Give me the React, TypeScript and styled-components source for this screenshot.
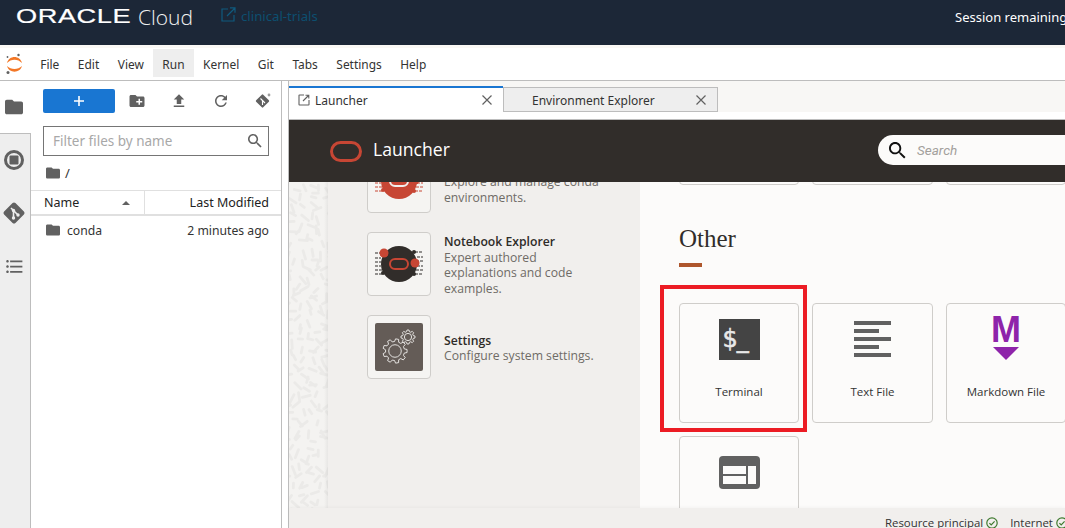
import { createGlobalStyle, styled } from "styled-components";

const GlobalStyle = createGlobalStyle`
  html, body {
    margin: 0;
    padding: 0;
    background: #fff;
    overflow: hidden;
  }
  * {
    box-sizing: border-box;
  }
`;

const Page = styled.div`
  width: 1065px;
  height: 528px;
  display: flex;
  flex-direction: column;
  overflow: hidden;
  font-family: "Noto Sans", "Open Sans", sans-serif;
  color: #333;
`;

const TopBar = styled.header`
  height: 45px;
  flex: none;
  background: #1c2737;
  display: flex;
  align-items: flex-start;
  padding-left: 16px;
  position: relative;
  white-space: nowrap;
`;
const OracleWord = styled.span`
  display: block;
  width: 114px;
  margin-top: 4px;
  font-family: "Liberation Sans", sans-serif;
  font-size: 20px;
  line-height: 24px;
  font-weight: 400;
  color: #fff;
  letter-spacing: 0.4px;
  -webkit-text-stroke: 0.2px #fff;
  transform: scaleX(1.36);
  transform-origin: left center;
`;
const CloudWord = styled.span`
  margin: 3px 0 0 8px;
  font-family: "Open Sans", sans-serif;
  font-size: 21px;
  line-height: 28px;
  font-weight: 300;
  color: #f2f2f2;
`;
const ProjectLink = styled.a`
  display: flex;
  align-items: center;
  gap: 5px;
  margin: 8px 0 0 28px;
  font-size: 13.2px;
  line-height: 16px;
  color: #0d4f70;
  svg {
    width: 15px;
    height: 15px;
    margin-top: -3px;
  }
`;
const Session = styled.span`
  position: absolute;
  left: 955px;
  top: 8px;
  font-size: 13px;
  line-height: 18px;
  color: #fff;
`;

const Strip = styled.div`
  height: 3px;
  flex: none;
  background: #faf8f5;
`;

const MenuBar = styled.nav`
  height: 33px;
  flex: none;
  display: flex;
  align-items: flex-start;
  padding: 1px 0 0 31px;
  background: #fff;
  border-bottom: 1px solid #bdbdbd;
  position: relative;
`;
const AppLogo = styled.svg`
  position: absolute;
  left: 5px;
  top: 5px;
  width: 18px;
  height: 22px;
`;
const MenuItem = styled.div<{ $active?: boolean }>`
  height: 28px;
  padding: 0 9.25px;
  font-size: 11.95px;
  line-height: 31px;
  color: #333;
  background: ${(p) => (p.$active ? "#eeeeee" : "transparent")};
`;

const Body = styled.div`
  flex: 1;
  min-height: 0;
  display: flex;
`;

const SideBar = styled.aside`
  width: 31px;
  flex: none;
  display: flex;
  flex-direction: column;
  background: #eeeeee;
  border-right: 1px solid #bdbdbd;
`;
const SideTab = styled.div<{ $active?: boolean }>`
  height: 53px;
  flex: none;
  display: flex;
  align-items: center;
  justify-content: center;
  padding: 0 ${(p) => (p.$active ? "3px" : "2px")} ${(p) => (p.$active ? "0" : "1px")} 0;
  margin-right: ${(p) => (p.$active ? "-1px" : "0")};
  background: ${(p) => (p.$active ? "#fff" : "transparent")};
  border-bottom: ${(p) => (p.$active ? "1px solid #bdbdbd" : "0")};
  svg {
    fill: #616161;
  }
`;

const FileBrowser = styled.section`
  width: 251px;
  flex: none;
  display: flex;
  flex-direction: column;
  background: #fff;
  border-right: 1px solid #bdbdbd;
`;
const Toolbar = styled.div`
  display: flex;
  align-items: center;
  height: 24px;
  margin: 8px 0 0 12px;
`;
const NewButton = styled.div`
  width: 72px;
  height: 24px;
  flex: none;
  margin-right: 1px;
  display: flex;
  align-items: center;
  justify-content: center;
  background: #1976d2;
  border-radius: 2px;
  svg {
    width: 12px;
    height: 12px;
  }
`;
const ToolButton = styled.div`
  width: 42px;
  height: 24px;
  flex: none;
  display: flex;
  align-items: center;
  justify-content: center;
  svg {
    fill: #616161;
  }
`;
const FilterBox = styled.div`
  height: 30px;
  margin: 13px 12px 0;
  padding: 0 6px 0 9px;
  display: flex;
  align-items: center;
  justify-content: space-between;
  border: 1px solid #757575;
  font-size: 13.5px;
  color: #a8a8a8;
  svg {
    fill: #616161;
  }
`;
const Crumbs = styled.div`
  height: 34px;
  padding-left: 15px;
  display: flex;
  align-items: center;
  gap: 5px;
  font-size: 13px;
  color: #333;
  svg {
    fill: #616161;
  }
`;
const ListHead = styled.div`
  height: 26px;
  display: flex;
  border-top: 1px solid #e0e0e0;
  border-bottom: 2px solid #e0e0e0;
  font-size: 12.5px;
  line-height: 24px;
  color: #222;
`;
const NameCol = styled.div`
  width: 114px;
  padding: 0 14px 0 13px;
  display: flex;
  align-items: center;
  justify-content: space-between;
  border-right: 1px solid #e0e0e0;
`;
const SortCaret = styled.span`
  width: 0;
  height: 0;
  border-left: 4.5px solid transparent;
  border-right: 4.5px solid transparent;
  border-bottom: 4.5px solid #616161;
`;
const DateCol = styled.div`
  flex: 1;
  padding-right: 12px;
  text-align: right;
`;
const FileRow = styled.div`
  height: 28px;
  padding: 0 12px 0 15px;
  display: flex;
  align-items: center;
  gap: 7px;
  font-size: 12.2px;
  color: #333;
  svg {
    fill: #616161;
  }
`;
const FileName = styled.span`
  flex: 1;
`;

const Splitter = styled.div`
  width: 6px;
  flex: none;
  background: #fff;
`;

const Main = styled.main`
  flex: 1;
  min-width: 0;
  display: flex;
  flex-direction: column;
  border-left: 1px solid #bdbdbd;
`;
const TabBar = styled.div`
  height: 31px;
  flex: none;
  display: flex;
  align-items: flex-end;
  background: #f8f7f5;
`;
const Tab = styled.div<{ $active?: boolean }>`
  width: ${(p) => (p.$active ? "214px" : "215px")};
  height: ${(p) => (p.$active ? "26px" : "25px")};
  display: flex;
  align-items: center;
  padding: ${(p) => (p.$active ? "0 10px 0 9px" : "1px 10px 0 28px")};
  gap: 5px;
  font-size: 12px;
  color: #333;
  background: ${(p) => (p.$active ? "#fff" : "#eeeeee")};
  border-top: ${(p) => (p.$active ? "2px solid #1976d2" : "1px solid #bdbdbd")};
  border-left: ${(p) => (p.$active ? "0" : "1px solid #bdbdbd")};
  border-right: ${(p) => (p.$active ? "0" : "1px solid #bdbdbd")};
  border-bottom: ${(p) => (p.$active ? "0" : "1px solid #bdbdbd")};
  svg {
    flex: none;
  }
`;
const TabLabel = styled.span`
  flex: 1;
`;
const Launcher = styled.div`
  flex: 1;
  min-height: 0;
  display: flex;
  flex-direction: column;
  padding-top: 7px;
  background: #fff;
  font-family: "Open Sans", "Noto Sans", sans-serif;
  position: relative;
`;
const LauncherHead = styled.div`
  height: 63px;
  flex: none;
  position: relative;
  z-index: 1;
  display: flex;
  align-items: center;
  padding-left: 41px;
  gap: 11px;
  background: #312d2a;
  border-top: 1px solid #bdbdbd;
  color: #fff;
  svg {
    flex: none;
  }
`;
const HeadTitle = styled.span`
  font-size: 17.6px;
  line-height: 24px;
  margin-top: -4px;
`;
const SearchBox = styled.div`
  position: absolute;
  left: 589px;
  top: 15px;
  width: 260px;
  height: 30px;
  display: flex;
  align-items: center;
  gap: 11px;
  padding-left: 11px;
  border-radius: 15px;
  background: #fcfbfa;
  font-family: Roboto, sans-serif;
  font-size: 13.5px;
  font-style: italic;
  color: #a3a09c;
`;
const LauncherBody = styled.div`
  flex: 1;
  min-height: 0;
  display: flex;
  overflow: hidden;
`;
const PatternStrip = styled.div`
  width: 39px;
  flex: none;
  position: relative;
  background: #f4f3f1;
  svg {
    display: block;
    width: 39px;
    height: 100%;
  }
  &::after {
    content: "";
    position: absolute;
    top: 0;
    bottom: 0;
    right: 0;
    width: 4px;
    background: linear-gradient(to right, rgba(0, 0, 0, 0), rgba(0, 0, 0, 0.05));
  }
`;
const ExamplePanel = styled.div`
  width: 312px;
  flex: none;
  padding: 0 0 0 39px;
  background: #f1efed;
  display: flex;
  flex-direction: column;
  gap: 19px;
`;
const ExampleRow = styled.div<{ $first?: boolean }>`
  display: flex;
  align-items: center;
  gap: 13px;
  margin-top: ${(p) => (p.$first ? "-33px" : "0")};
`;
const ExampleCard = styled.div`
  width: 64px;
  height: 64px;
  flex: none;
  display: flex;
  align-items: center;
  justify-content: center;
  border: 1px solid #cfcdca;
  border-radius: 4px;
  background: #f5f4f2;
`;
const ExampleText = styled.div`
  font-size: 12.2px;
  line-height: 15.5px;
  color: #6f6b66;
  width: 160px;
  margin-top: 2px;
`;
const ExampleTitle = styled.div`
  font-weight: 600;
  color: #2e2b28;
`;
const SettingsTile = styled.div`
  width: 48px;
  height: 48px;
  display: flex;
  align-items: center;
  justify-content: center;
  background: #645c57;
  border-radius: 2px;
`;
const CardPanel = styled.div`
  flex: 1;
  min-width: 0;
  padding-left: 39px;
  background: #fcfbfa;
`;
const TopCards = styled.div`
  display: grid;
  grid-template-columns: 120px 121px 120px;
  gap: 13px;
  margin-top: -117px;
`;
const SectionTitle = styled.h2`
  margin: 38px 0 0;
  font-family: "Liberation Serif", serif;
  font-size: 25px;
  line-height: 32px;
  font-weight: 400;
  color: #312d2a;
`;
const SectionRule = styled.div`
  width: 23px;
  height: 4px;
  margin-top: 8px;
  background: #ae562c;
`;
const Cards = styled.div`
  display: grid;
  grid-template-columns: 120px 121px 120px;
  gap: 13px;
  margin-top: 36px;
`;
const Card = styled.div`
  height: 120px;
  position: relative;
  display: flex;
  flex-direction: column;
  align-items: center;
  border: 1px solid #cfcdca;
  border-radius: 4px;
  background: #fcfbfa;
`;
const CardIconSlot = styled.div`
  height: 70px;
  flex: none;
  width: 100%;
  display: flex;
  flex-direction: column;
  align-items: center;
  justify-content: center;
`;
const CardLabel = styled.div`
  margin-top: 10px;
  font-size: 11.5px;
  line-height: 16px;
  color: #333;
`;
const Highlight = styled.div`
  position: absolute;
  left: -20px;
  top: -19px;
  width: 147px;
  height: 147px;
  border: 4px solid #ec1c24;
  pointer-events: none;
`;
const TerminalTile = styled.div`
  width: 41px;
  height: 41px;
  padding: 6px 0 0 4px;
  background: #444;
  color: #e8e8e8;
  font-family: "DejaVu Sans", sans-serif;
  font-size: 24px;
  line-height: 28px;
  letter-spacing: -1px;
  -webkit-text-stroke: 0.5px #e8e8e8;
  white-space: nowrap;
  overflow: hidden;
`;
const MarkdownLetter = styled.div`
  margin-top: -2px;
  font-family: "Liberation Sans", sans-serif;
  font-weight: 700;
  font-size: 36px;
  line-height: 27px;
  color: #8e24aa;
`;
const MarkdownArrow = styled.div`
  width: 0;
  height: 0;
  margin-top: 4px;
  border-left: 13px solid transparent;
  border-right: 13px solid transparent;
  border-top: 13px solid #8e24aa;
`;
const StatusBar = styled.footer`
  height: 20px;
  flex: none;
  display: flex;
  align-items: flex-start;
  padding: 7px 0 0 596px;
  background: #f1efed;
  box-shadow: 0 -1px 3px rgba(0, 0, 0, 0.03);
  font-size: 11.4px;
  line-height: 16px;
  color: #333;
  white-space: nowrap;
  position: relative;
`;
const StatusItem = styled.span`
  display: flex;
  align-items: center;
  gap: 3px;
  margin-right: 12px;
  svg {
    flex: none;
  }
`;

const FolderIcon = ({ size = 16 }: { size?: number }) => (
  <svg width={size} height={size} viewBox="2 4 20 16">
    <path d="M10 4H4c-1.1 0-1.99.9-1.99 2L2 18c0 1.1.9 2 2 2h16c1.1 0 2-.9 2-2V8c0-1.1-.9-2-2-2h-8l-2-2z" />
  </svg>
);

const GitDiamond = ({ size }: { size: number }) => (
  <svg width={size} height={size} viewBox="0 0 24 24">
    <rect x="4" y="4" width="16" height="16" rx="2" fill="#616161" transform="rotate(45 12 12)" />
    <path d="M9 7l7 7M11.5 9.5v8" stroke="#eee" strokeWidth="1.6" fill="none" />
    <circle cx="11.5" cy="9.5" r="1.7" fill="#eee" />
    <circle cx="11.5" cy="17" r="1.7" fill="#eee" />
    <circle cx="16" cy="14" r="1.7" fill="#eee" />
  </svg>
);

const CloseIcon = () => (
  <svg width="12" height="12" viewBox="0 0 12 12">
    <path d="M1.5 1.5l9 9M10.5 1.5l-9 9" stroke="#616161" strokeWidth="1.2" fill="none" />
  </svg>
);

const CheckIcon = () => (
  <svg width="12" height="12" viewBox="0 0 12 12">
    <circle cx="6" cy="6" r="5.2" fill="none" stroke="#3f7a2f" strokeWidth="1.2" />
    <path d="M3.4 6.2l1.8 1.8 3.4-3.6" fill="none" stroke="#3f7a2f" strokeWidth="1.2" />
  </svg>
);

const SearchGlyph = ({ size, color }: { size: number; color?: string }) => (
  <svg width={size} height={size} viewBox="3 3 18 18" fill={color}>
    <path d="M15.5 14h-.79l-.28-.27C15.41 12.59 16 11.11 16 9.5 16 5.91 13.09 3 9.5 3S3 5.91 3 9.5 5.91 16 9.5 16c1.61 0 3.09-.59 4.23-1.57l.27.28v.79l5 4.99L20.49 19l-4.99-5zm-6 0C7.01 14 5 11.99 5 9.5S7.01 5 9.5 5 14 7.01 14 9.5 11.99 14 9.5 14z" />
  </svg>
);

// circle with the oracle oval and circuit ticks, used by both example cards
const CircuitIcon = ({ body, oval, dot }: { body: string; oval: string; dot: string }) => {
  const tick = body === "#c74634" ? "#c74634" : "#312d2a";
  return (
    <svg width="48" height="36" viewBox="0 0 48 36">
      <path
        d="M0 7h8M0 12h6M0 16h7M0 20h6M0 24h8M0 28h7M40 6h8M42 11h6M41 15h7M42 20h6M41 24h7M40 28h8"
        stroke={tick}
        strokeWidth="1.2"
        strokeDasharray="3 1"
      />
      <circle cx="24" cy="18" r="18" fill={body} />
      <rect x="15" y="13" width="18" height="10" rx="5" fill="none" stroke={oval} strokeWidth="2" />
      <circle cx="9" cy="7" r="4.5" fill={dot} />
      <circle cx="40" cy="17" r="4.5" fill={dot} />
      <circle cx="39" cy="6" r="2" fill={tick} />
      <circle cx="8" cy="27" r="2" fill={tick} />
      <circle cx="39" cy="28" r="2" fill={tick} />
    </svg>
  );
};

const Gear = ({ cx, cy, r, teeth }: { cx: number; cy: number; r: number; teeth: number }) => {
  const d: string[] = [];
  for (let i = 0; i < teeth; i++) {
    const a = (i / teeth) * Math.PI * 2;
    const step = (Math.PI * 2) / teeth;
    const pts = [
      [r, a - step * 0.32],
      [r + r * 0.28, a - step * 0.18],
      [r + r * 0.28, a + step * 0.18],
      [r, a + step * 0.32],
    ];
    pts.forEach(([rad, ang], j) => {
      d.push(`${i === 0 && j === 0 ? "M" : "L"}${(cx + rad * Math.cos(ang)).toFixed(2)} ${(cy + rad * Math.sin(ang)).toFixed(2)}`);
    });
  }
  return (
    <g fill="none" stroke="#f1efed" strokeWidth="0.9">
      <path d={d.join(" ") + "Z"} />
      <circle cx={cx} cy={cy} r={r * 0.66} />
    </g>
  );
};

const PatternMarks = () => {
  // scattered rice-like marks, seeded so it stays the same each render
  const marks: string[] = [];
  let seed = 17;
  const rnd = () => {
    seed = (seed * 9301 + 49297) % 233280;
    return seed / 233280;
  };
  for (let y = 2; y < 330; y += 9) {
    for (let x = 0; x < 39; x += 9) {
      const px = x + rnd() * 6;
      const py = y + rnd() * 6;
      const a = rnd() * Math.PI;
      const l = 4 + rnd() * 5;
      marks.push(`M${px.toFixed(1)} ${py.toFixed(1)}l${(Math.cos(a) * l).toFixed(1)} ${(Math.sin(a) * l).toFixed(1)}`);
    }
  }
  return (
    <svg>
      <path d={marks.join("")} stroke="#ebeae8" strokeWidth="2.8" strokeLinecap="round" fill="none" />
    </svg>
  );
};

export default function App() {
  const menus = ["File", "Edit", "View", "Run", "Kernel", "Git", "Tabs", "Settings", "Help"];

  return (
    <Page>
      <GlobalStyle />
      <TopBar>
        <OracleWord>ORACLE</OracleWord>
        <CloudWord>Cloud</CloudWord>
        <ProjectLink>
          <svg viewBox="0 0 15 15" fill="none" stroke="#0f5a7e" strokeWidth="1.2">
            <path d="M7 2H1v12h12V8M6 9l8-8M9 .8h5v5" />
          </svg>
          clinical-trials
        </ProjectLink>
        <Session>Session remaining</Session>
      </TopBar>
      <Strip />
      <MenuBar>
        <AppLogo viewBox="0 0 18 22">
          <path d="M2 10C4 2 15 2 17 10C13 5.5 6 5.5 2 10Z" fill="#f37726" />
          <path d="M2 13C4 20.5 15 20.5 17 13C13 17 6 17 2 13Z" fill="#f37726" />
          <circle cx="13.5" cy="2" r="1.2" fill="#616161" />
          <circle cx="3" cy="19.5" r="1.5" fill="#616161" />
          <circle cx="2.5" cy="4" r="0.9" fill="#616161" />
        </AppLogo>
        {menus.map((m) => (
          <MenuItem key={m} $active={m === "Run"}>
            {m}
          </MenuItem>
        ))}
      </MenuBar>
      <Body>
        <SideBar>
          <SideTab $active>
            <FolderIcon size={18} />
          </SideTab>
          <SideTab>
            <svg width="20" height="20" viewBox="0 0 20 20">
              <path
                fillRule="evenodd"
                d="M10 0a10 10 0 1 0 0 20a10 10 0 1 0 0-20zM10 3a7 7 0 1 1 0 14a7 7 0 1 1 0-14z"
              />
              <rect x="5.5" y="5.5" width="9" height="9" rx="1" />
            </svg>
          </SideTab>
          <SideTab>
            <GitDiamond size={24} />
          </SideTab>
          <SideTab>
            <svg width="21" height="21" viewBox="0 0 24 24">
              <path d="M4 10.5c-.83 0-1.5.67-1.5 1.5s.67 1.5 1.5 1.5 1.5-.67 1.5-1.5-.67-1.5-1.5-1.5zm0-6c-.83 0-1.5.67-1.5 1.5S3.17 7.5 4 7.5 5.5 6.83 5.5 6 4.83 4.5 4 4.5zm0 12c-.83 0-1.5.68-1.5 1.5s.68 1.5 1.5 1.5 1.5-.68 1.5-1.5-.67-1.5-1.5-1.5zM7 19h14v-2H7v2zm0-6h14v-2H7v2zm0-8v2h14V5H7z" />
            </svg>
          </SideTab>
        </SideBar>
        <FileBrowser>
          <Toolbar>
            <NewButton>
              <svg viewBox="0 0 12 12">
                <path d="M6 1v10M1 6h10" stroke="#fff" strokeWidth="1.6" />
              </svg>
            </NewButton>
            <ToolButton>
              <svg width="18" height="18" viewBox="0 0 24 24">
                <path d="M20 6h-8l-2-2H4c-1.11 0-1.99.89-1.99 2L2 18c0 1.11.89 2 2 2h16c1.11 0 2-.89 2-2V8c0-1.11-.89-2-2-2zm-1 8h-3v3h-2v-3h-3v-2h3V9h2v3h3v2z" />
              </svg>
            </ToolButton>
            <ToolButton>
              <svg width="18" height="18" viewBox="0 0 24 24">
                <path d="M9 16h6v-6h4l-7-7-7 7h4zm-4 2h14v2H5z" />
              </svg>
            </ToolButton>
            <ToolButton>
              <svg width="18" height="18" viewBox="0 0 24 24">
                <path d="M17.65 6.35C16.2 4.9 14.21 4 12 4c-4.42 0-7.99 3.58-7.99 8s3.57 8 7.99 8c3.73 0 6.84-2.55 7.73-6h-2.08c-.82 2.33-3.04 4-5.65 4-3.31 0-6-2.69-6-6s2.69-6 6-6c1.66 0 3.14.69 4.22 1.78L13 11h7V4l-2.35 2.35z" />
              </svg>
            </ToolButton>
            <ToolButton>
              <svg width="16" height="16" viewBox="0 0 16 16">
                <rect x="2.5" y="3" width="10" height="10" rx="1" transform="rotate(45 7.5 8)" />
                <path d="M5.5 5.5l4.5 4.5M7.5 7.5v4.5" stroke="#fff" strokeWidth="1.1" fill="none" />
                <circle cx="14" cy="2" r="1.4" fill="#9e9e9e" />
              </svg>
            </ToolButton>
          </Toolbar>
          <FilterBox>
            Filter files by name
            <SearchGlyph size={14} />
          </FilterBox>
          <Crumbs>
            <FolderIcon size={14} />/
          </Crumbs>
          <ListHead>
            <NameCol>
              Name
              <SortCaret />
            </NameCol>
            <DateCol>Last Modified</DateCol>
          </ListHead>
          <FileRow>
            <FolderIcon size={14} />
            <FileName>conda</FileName>2 minutes ago
          </FileRow>
        </FileBrowser>
        <Splitter />
        <Main>
          <TabBar>
            <Tab $active>
              <svg width="12" height="12" viewBox="0 0 12 12" fill="none" stroke="#616161" strokeWidth="1.1">
                <path d="M6 1H1.5a.5.5 0 0 0-.5.5v9a.5.5 0 0 0 .5.5h9a.5.5 0 0 0 .5-.5V6M5 7l5.5-5.5M7.5 1.2h3.3v3.3" />
              </svg>
              <TabLabel>Launcher</TabLabel>
              <CloseIcon />
            </Tab>
            <Tab>
              <TabLabel>Environment Explorer</TabLabel>
              <CloseIcon />
            </Tab>
          </TabBar>
          <Launcher>
            <LauncherHead>
              <svg width="32" height="21" viewBox="0 0 32 21">
                <rect x="1.5" y="1.5" width="29" height="18" rx="9" fill="none" stroke="#c74634" strokeWidth="3" />
              </svg>
              <HeadTitle>Launcher</HeadTitle>
              <SearchBox>
                <SearchGlyph size={17} color="#111" />
                Search
              </SearchBox>
            </LauncherHead>
            <LauncherBody>
              <PatternStrip>
                <PatternMarks />
              </PatternStrip>
              <ExamplePanel>
                <ExampleRow $first>
                  <ExampleCard>
                    <CircuitIcon body="#c74634" oval="#f1efed" dot="#c74634" />
                  </ExampleCard>
                  <ExampleText>
                    <ExampleTitle>Environment Explorer</ExampleTitle>
                    Explore and manage conda environments.
                  </ExampleText>
                </ExampleRow>
                <ExampleRow>
                  <ExampleCard>
                    <CircuitIcon body="#312d2a" oval="#c74634" dot="#c74634" />
                  </ExampleCard>
                  <ExampleText>
                    <ExampleTitle>Notebook Explorer</ExampleTitle>
                    Expert authored explanations and code examples.
                  </ExampleText>
                </ExampleRow>
                <ExampleRow>
                  <ExampleCard>
                    <SettingsTile>
                      <svg width="48" height="48" viewBox="0 0 48 48">
                        <Gear cx={20} cy={28} r={9.5} teeth={9} />
                        <Gear cx={33} cy={14} r={5.5} teeth={8} />
                      </svg>
                    </SettingsTile>
                  </ExampleCard>
                  <ExampleText>
                    <ExampleTitle>Settings</ExampleTitle>
                    Configure system settings.
                  </ExampleText>
                </ExampleRow>
              </ExamplePanel>
              <CardPanel>
                <TopCards>
                  <Card />
                  <Card />
                  <Card />
                </TopCards>
                <SectionTitle>Other</SectionTitle>
                <SectionRule />
                <Cards>
                  <Card>
                    <CardIconSlot>
                      <TerminalTile>$_</TerminalTile>
                    </CardIconSlot>
                    <CardLabel>Terminal</CardLabel>
                    <Highlight />
                  </Card>
                  <Card>
                    <CardIconSlot>
                      <svg width="37" height="36" viewBox="0 0 37 36" fill="#616161">
                        <rect width="37" height="4" y="0" />
                        <rect width="25" height="4" y="8" />
                        <rect width="37" height="4" y="16" />
                        <rect width="25" height="4" y="24" />
                        <rect width="37" height="4" y="32" />
                      </svg>
                    </CardIconSlot>
                    <CardLabel>Text File</CardLabel>
                  </Card>
                  <Card>
                    <CardIconSlot>
                      <MarkdownLetter>M</MarkdownLetter>
                      <MarkdownArrow />
                    </CardIconSlot>
                    <CardLabel>Markdown File</CardLabel>
                  </Card>
                  <Card>
                    <CardIconSlot>
                      <svg width="41" height="33" viewBox="0 0 41 33">
                        <rect width="41" height="33" rx="4" fill="#616161" />
                        <rect x="4" y="10" width="23" height="8" fill="#fcfbfa" />
                        <rect x="4" y="20" width="23" height="8" fill="#fcfbfa" />
                        <rect x="29" y="10" width="8" height="18" fill="#fcfbfa" />
                      </svg>
                    </CardIconSlot>
                  </Card>
                </Cards>
              </CardPanel>
            </LauncherBody>
            <StatusBar>
              <StatusItem>
                Resource principal <CheckIcon />
              </StatusItem>
              <StatusItem>
                Internet <CheckIcon />
              </StatusItem>
            </StatusBar>
          </Launcher>
        </Main>
      </Body>
    </Page>
  );
}
